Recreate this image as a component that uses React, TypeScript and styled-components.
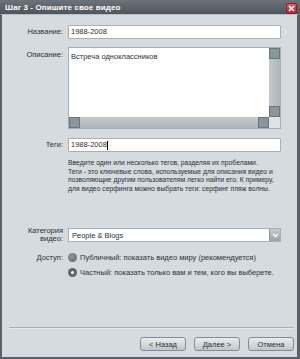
import React from "react";
import styled, { createGlobalStyle } from "styled-components";

const GlobalStyle = createGlobalStyle`
  html, body {
    margin: 0;
    padding: 0;
    background: #d5dbde;
  }
  * {
    box-sizing: border-box;
  }
`;

const Window = styled.div`
  width: 300px;
  height: 359px;
  display: flex;
  flex-direction: column;
  font-family: "Liberation Sans", Arial, sans-serif;
  color: #2c3034;
`;

const TitleBar = styled.div`
  height: 14px;
  flex-shrink: 0;
  display: flex;
  align-items: center;
  justify-content: space-between;
  padding: 0 3px 0 5px;
  background: linear-gradient(#6c737a, #4e555c);
  color: #ffffff;
  font-size: 8px;
  font-weight: bold;
  letter-spacing: 0.1px;
`;

const CloseButton = styled.div`
  width: 11px;
  height: 11px;
  margin-top: 2px;
  border-radius: 2px;
  border: 1px solid #8e1f26;
  background: linear-gradient(#e0636a, #b8242d);
  display: flex;
  align-items: center;
  justify-content: center;
`;

const Frame = styled.div`
  flex: 1;
  display: flex;
  flex-direction: column;
  background: #d5dbde;
  border-left: 2px solid #5a6168;
  border-right: 3px solid #5a6168;
  border-bottom: 2px solid #5a6168;
  border-top: 1px solid #b9c0c5;
`;

const Form = styled.div`
  display: flex;
  flex-direction: column;
  padding-top: 10px;
`;

const Row = styled.div<{ $mt?: number; $top?: boolean }>`
  display: grid;
  grid-template-columns: 61px 213px;
  column-gap: 5px;
  align-items: ${(p) => (p.$top ? "start" : "center")};
  margin-top: ${(p) => p.$mt ?? 0}px;
`;

const Label = styled.div<{ $pt?: number }>`
  text-align: right;
  font-size: 7.5px;
  line-height: 8px;
  padding-top: ${(p) => p.$pt ?? 0}px;
`;

const Input = styled.div`
  height: 14px;
  background: #ffffff;
  border: 1px solid #a9b0b5;
  border-radius: 1px;
  font-size: 7.5px;
  line-height: 12px;
  padding-left: 2px;
  display: flex;
  align-items: center;
`;

const Caret = styled.span`
  display: inline-block;
  width: 1px;
  height: 9px;
  background: #000;
`;

const TextBox = styled.div`
  height: 82px;
  background: #ffffff;
  border: 1px solid #a9b0b5;
  display: grid;
  grid-template-columns: 1fr 11px;
  grid-template-rows: 1fr 11px;
`;

const TextArea = styled.div`
  font-size: 7.5px;
  padding: 4px 2px;
  line-height: 9px;
`;

const VTrack = styled.div`
  display: flex;
  flex-direction: column;
  justify-content: space-between;
  background: linear-gradient(90deg, #c3c9cd, #aeb5ba);
`;

const HTrack = styled.div`
  display: flex;
  justify-content: space-between;
  background: linear-gradient(#c3c9cd, #aeb5ba);
`;

const Corner = styled.div`
  background: #dfe3e5;
`;

const Thumb = styled.div`
  width: 11px;
  height: 11px;
  background: #8b959c;
  border: 1px solid #6c757c;
`;

const Help = styled.div`
  font-size: 6.8px;
  line-height: 8.5px;
  grid-column: 2;
  margin-top: 7px;
`;

const Select = styled.div`
  height: 14px;
  background: #ffffff;
  border: 1px solid #a9b0b5;
  font-size: 7.5px;
  padding-left: 3px;
  display: flex;
  align-items: center;
  justify-content: space-between;
`;

const SelectArrow = styled.div`
  width: 11px;
  height: 12px;
  background: linear-gradient(#c6ccd0, #9aa3a9);
  border-left: 1px solid #8a939a;
  display: flex;
  align-items: center;
  justify-content: center;
`;

const RadioLine = styled.div`
  display: flex;
  align-items: center;
  gap: 3px;
  font-size: 7.5px;
  grid-column: 2;
`;

const Radio = styled.div<{ $checked?: boolean }>`
  width: 9px;
  height: 9px;
  border-radius: 50%;
  background: ${(p) =>
    p.$checked ? "#5e676e" : "radial-gradient(circle at 40% 35%, #8f989e, #5b646b)"};
  display: flex;
  align-items: center;
  justify-content: center;
  &::after {
    content: "";
    display: ${(p) => (p.$checked ? "block" : "none")};
    width: 3px;
    height: 3px;
    border-radius: 50%;
    background: #ffffff;
  }
`;

const Footer = styled.div`
  margin-top: auto;
  padding: 0 3px 6px 7px;
`;

const Separator = styled.div`
  height: 1px;
  background: #a9b0b5;
  border-bottom: 1px solid #e6eaec;
  box-sizing: content-box;
`;

const Buttons = styled.div`
  display: flex;
  justify-content: flex-end;
  gap: 8px;
  margin-top: 8px;
`;

const Button = styled.div`
  width: 46px;
  height: 14px;
  border: 1px solid #838c93;
  border-radius: 3px;
  background: linear-gradient(#e9edef, #bfc6cb);
  font-size: 7.5px;
  display: flex;
  align-items: center;
  justify-content: center;
`;

const ChevronDown = () => (
  <svg width="7" height="5" viewBox="0 0 7 5">
    <path d="M1 1 L3.5 3.5 L6 1" stroke="#ffffff" strokeWidth="1.3" fill="none" />
  </svg>
);

const CloseX = () => (
  <svg width="7" height="7" viewBox="0 0 7 7">
    <path d="M1 1 L6 6 M6 1 L1 6" stroke="#ffffff" strokeWidth="1.5" />
  </svg>
);

export default function App() {
  return (
    <>
      <GlobalStyle />
      <Window>
        <TitleBar>
          <span>Шаг 3 - Опишите свое видео</span>
          <CloseButton>
            <CloseX />
          </CloseButton>
        </TitleBar>
        <Frame>
          <Form>
            <Row>
              <Label>Название:</Label>
              <Input>1988-2008</Input>
            </Row>
            <Row $mt={8} $top>
              <Label $pt={4}>Описание:</Label>
              <TextBox>
                <TextArea>Встреча одноклассников</TextArea>
                <VTrack>
                  <Thumb />
                  <Thumb />
                </VTrack>
                <HTrack>
                  <Thumb />
                  <Thumb />
                </HTrack>
                <Corner />
              </TextBox>
            </Row>
            <Row $mt={9}>
              <Label>Теги:</Label>
              <Input>
                1988-2008
                <Caret />
              </Input>
            </Row>
            <Row>
              <Help>
                Введите один или несколько тегов, разделяя их пробелами.
                <br />
                Теги - это ключевые слова, используемые для описания видео и
                <br />
                позволяющие другим пользователям легко найти его. К примеру,
                <br />
                для видео серфинга можно выбрать теги: серфинг пляж волны.
              </Help>
            </Row>
            <Row $mt={34}>
              <Label>
                Категория
                <br />
                видео:
              </Label>
              <Select>
                People &amp; Blogs
                <SelectArrow>
                  <ChevronDown />
                </SelectArrow>
              </Select>
            </Row>
            <Row $mt={10}>
              <Label>Доступ:</Label>
              <RadioLine>
                <Radio />
                Публичный: показать видео миру (рекомендуется)
              </RadioLine>
            </Row>
            <Row $mt={6}>
              <span />
              <RadioLine>
                <Radio $checked />
                Частный: показать только вам и тем, кого вы выберете.
              </RadioLine>
            </Row>
          </Form>
          <Footer>
            <Separator />
            <Buttons>
              <Button>&lt; Назад</Button>
              <Button>Далее &gt;</Button>
              <Button>Отмена</Button>
            </Buttons>
          </Footer>
        </Frame>
      </Window>
    </>
  );
}
